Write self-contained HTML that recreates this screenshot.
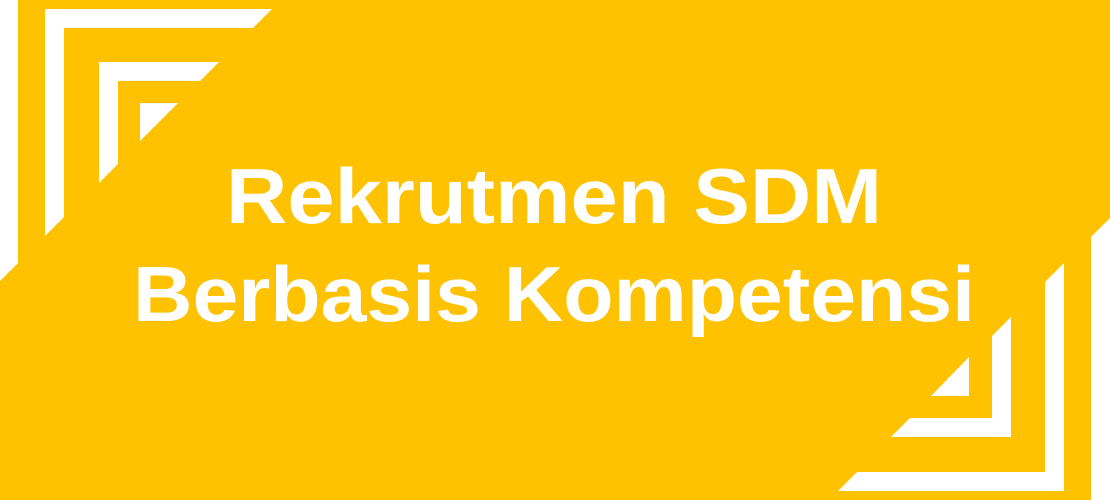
<!DOCTYPE html>
<html><head><meta charset="utf-8"><style>
html,body{margin:0;padding:0;background:#FEC200;}
svg{display:block}
</style></head><body>
<svg width="1110" height="500" viewBox="0 0 1110 500" xmlns="http://www.w3.org/2000/svg">
<rect width="1110" height="500" fill="#FEC200"/>
<g fill="#fff">
<polygon points="0,0 18,0 18,263 0,281"/>
<polygon points="45,9 272,9 253,28 64,28 64,217 45,236"/>
<polygon points="99,62 219,62 200,81 118,81 118,164 99,183"/>
<polygon points="140,103 178,103 140,141"/>
<polygon points="1091,237 1110,218 1110,500 1091,500"/>
<polygon points="1064,263 1064,491 838,491 857,472 1045,472 1045,282"/>
<polygon points="1011,317 1011,437 891,437 910,418 992,418 992,336"/>
<polygon points="969,357 969,396 931,396"/>
</g>
<g fill="#fff" font-family="Liberation Sans, sans-serif" font-weight="700" font-size="78">
<text x="226" y="223" textLength="656" lengthAdjust="spacingAndGlyphs">Rekrutmen SDM</text>
<text x="133" y="321" textLength="842" lengthAdjust="spacingAndGlyphs">Berbasis Kompetensi</text>
</g>
</svg>
</body></html>
